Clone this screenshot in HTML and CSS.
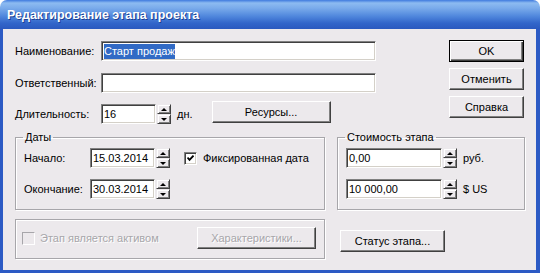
FILE: index.html
```html
<!DOCTYPE html>
<html lang="ru">
<head>
    <meta charset="UTF-8">
    <title>Редактирование этапа проекта</title>
    <link rel="stylesheet" href="styles.css">
</head>
<body>
    <div class="window">
        <div class="titlebar">Редактирование этапа проекта</div>

        <div class="client">
            <div class="top">
                <div class="fields">
                    <div class="row">
                        <span class="lbl">Наименование:</span>
                        <div class="edit wide"><span class="sel">Старт продаж</span></div>
                    </div>
                    <div class="row">
                        <span class="lbl">Ответственный:</span>
                        <div class="edit wide"></div>
                    </div>
                    <div class="row row-last">
                        <span class="lbl">Длительность:</span>
                        <div class="edit short">16</div>
                        <div class="spin"><i class="up"></i><i class="down"></i></div>
                        <span class="unit">дн.</span>
                        <div class="btn btn-res">Ресурсы...</div>
                    </div>
                </div>

                <!-- dialog buttons -->
                <div class="side">
                    <div class="btn default">OK</div>
                    <div class="btn">Отменить</div>
                    <div class="btn">Справка</div>
                </div>
            </div>

            <div class="groups">
                <fieldset class="group">
                    <legend>Даты</legend>
                    <div class="grow">
                        <span class="glbl">Начало:</span>
                        <div class="edit date">15.03.2014</div>
                        <div class="spin"><i class="up"></i><i class="down"></i></div>
                        <div class="check">
                            <svg width="7" height="7" viewBox="0 0 7 7"><path d="M0.5 2.5 L2.5 4.8 L6.5 0.6" fill="none" stroke="#000" stroke-width="1.8"/></svg>
                        </div>
                        <span class="check-text">Фиксированная дата</span>
                    </div>
                    <div class="grow">
                        <span class="glbl">Окончание:</span>
                        <div class="edit date">30.03.2014</div>
                        <div class="spin"><i class="up"></i><i class="down"></i></div>
                    </div>
                </fieldset>

                <fieldset class="group">
                    <legend>Стоимость этапа</legend>
                    <div class="grow">
                        <div class="edit money">0,00</div>
                        <div class="spin"><i class="up"></i><i class="down"></i></div>
                        <span class="unit">руб.</span>
                    </div>
                    <div class="grow">
                        <div class="edit money">10 000,00</div>
                        <div class="spin"><i class="up"></i><i class="down"></i></div>
                        <span class="unit">$ US</span>
                    </div>
                </fieldset>

                <fieldset class="group bottom">
                    <div class="check disabled"></div>
                    <span class="check-text dim">Этап является активом</span>
                    <div class="btn disabled btn-char">Характеристики...</div>
                </fieldset>

                <div class="btn btn-status">Статус этапа...</div>
            </div>
        </div>
    </div>
</body>
</html>
```

FILE: styles.css
```css
body {
    margin: 0;
    background-color: #fff;
    font-family: "Liberation Sans", Arial, sans-serif;
    font-size: 11px;
    color: #000;
}

.window {
    width: 540px;
    height: 273px;
    display: flex;
    flex-direction: column;
}

.titlebar {
    height: 29px;
    box-sizing: border-box;
    padding: 8px 0 0 7px;
    border-radius: 7px 7px 0 0;
    background: linear-gradient(#3f7ade 0, #8dbbf1 3px, #7aabeb 8px, #5188dd 16px, #3266ca 23px, #2a59bf 29px);
    color: #fff;
    font-weight: bold;
    font-size: 12.5px;
    text-shadow: 1px 1px #1d3f93;
}

.client {
    flex: 1;
    background-color: #ece9ec;
    border: solid #2c5ac4;
    border-width: 0 4px 3px 3px;
    padding: 11px 12px 0 12px;
}

.top {
    display: flex;
    justify-content: space-between;
}

.fields {
    padding-top: 1px;
}

.row {
    display: flex;
    align-items: center;
    height: 20px;
}

.row + .row {
    margin-top: 12px;
}

.row.row-last {
    margin-top: 11px;
}

.lbl {
    width: 86px;
}

/* sunken edit box */
.edit {
    box-sizing: border-box;
    height: 20px;
    display: flex;
    align-items: center;
    padding: 0 2px;
    background-color: #fff;
    border: 1px solid;
    border-color: #808080 #fff #fff #808080;
    box-shadow: inset 1px 1px #404040, inset -1px -1px #d4d0c8;
}

.edit.wide {
    width: 275px;
}

.edit.short {
    width: 55px;
}

.edit.date {
    width: 65px;
}

.edit.money {
    width: 96px;
}

.sel {
    background-color: #316ac5;
    color: #fff;
    line-height: 15px;
}

.spin {
    display: flex;
    flex-direction: column;
    width: 14px;
    height: 20px;
    margin-left: 1px;
}

.spin i {
    flex: 1;
    display: flex;
    align-items: center;
    justify-content: center;
    border: 1px solid;
    border-color: #ece9ec #404040 #404040 #ece9ec;
    box-shadow: inset 1px 1px #fff, inset -1px -1px #808080;
}

.spin i::after {
    content: "";
    border-left: 3px solid transparent;
    border-right: 3px solid transparent;
}

.spin .up::after {
    border-bottom: 3px solid #000;
}

.spin .down::after {
    border-top: 3px solid #000;
}

.unit {
    margin-left: 6px;
}

/* raised push button */
.btn {
    box-sizing: border-box;
    height: 22px;
    display: flex;
    align-items: center;
    justify-content: center;
    background-color: #ece9ec;
    border: 1px solid;
    border-color: #fff #404040 #404040 #fff;
    box-shadow: inset -1px -1px #808080;
}

.btn.default {
    border-color: #000;
    box-shadow: inset 1px 1px #fff, inset -1px -1px #404040, inset -2px -2px #808080;
}

.btn.disabled {
    color: #a7a6aa;
    text-shadow: 1px 1px #fff;
}

.side {
    width: 75px;
    display: flex;
    flex-direction: column;
    gap: 6px;
}

.btn-res {
    width: 119px;
    margin-left: 19px;
    align-self: flex-start;
    margin-top: -3px;
}

.groups {
    display: grid;
    grid-template-columns: 310px 188px;
    column-gap: 12px;
    row-gap: 9px;
    margin-top: 6px;
}

.group {
    margin: 0;
    min-width: 0;
    padding: 4px 7px 10px 8px;
    border: 1px solid #a7a6aa;
    box-shadow: inset 1px 1px #fff, 1px 1px #fff;
}

.group legend {
    margin-left: -1px;
    padding: 0 2px;
    line-height: 14px;
}

.grow {
    display: flex;
    align-items: center;
    height: 20px;
}

.grow + .grow {
    margin-top: 11px;
}

.glbl {
    width: 66px;
}

.check {
    box-sizing: border-box;
    width: 13px;
    height: 13px;
    margin-left: 14px;
    display: flex;
    align-items: center;
    justify-content: center;
    background-color: #fff;
    border: 1px solid;
    border-color: #808080 #fff #fff #808080;
    box-shadow: inset 1px 1px #404040, inset -1px -1px #d4d0c8;
}

.check-text {
    margin-left: 6px;
}

.group.bottom {
    display: flex;
    align-items: center;
    padding: 7px 8px 9px 6px;
}

.check.disabled {
    margin-left: 0;
    background-color: #ece9ec;
    border-color: #a7a6aa #fff #fff #a7a6aa;
    box-shadow: none;
}

.dim {
    color: #a7a6aa;
    text-shadow: 1px 1px #fff;
    margin-left: 5px;
}

.btn-char {
    width: 119px;
    margin-left: auto;
}

.btn-status {
    width: 105px;
    margin-left: 3px;
    margin-top: 4px;
    align-self: center;
}
```
